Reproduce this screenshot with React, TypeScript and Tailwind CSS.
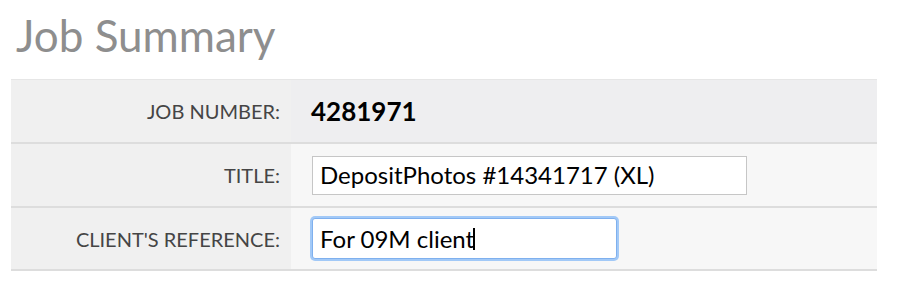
import React from "react";

export default function App() {
  return (
    <div className="w-[898px] h-[306px] bg-white" style={{ fontFamily: "Lato, 'Noto Sans', sans-serif" }}>
      <div className="pl-[11px] pt-[9px]">
        <h1 className="pl-[5px] text-[44px] leading-[52px] text-[#8e8e8e] font-normal">Job Summary</h1>
        <div className="mt-[18px] w-[866px] border-t border-[#e6e6e6]">
          <div className="flex h-[64px] border-b-2 border-[#dddddd]">
            <div className="w-[280px] bg-[#f0f0f0] flex items-center justify-end pr-[11px] text-[20px] text-[#454545] uppercase">
              Job Number:
            </div>
            <div className="flex-1 bg-[#eeeef0] flex items-center pl-[20px] text-[26px] font-bold text-black">
              4281971
            </div>
          </div>
          <div className="flex h-[64px] border-b-2 border-[#dddddd]">
            <div className="w-[280px] bg-[#f0f0f0] flex items-center justify-end pr-[11px] text-[20px] text-[#454545] uppercase">
              Title:
            </div>
            <div className="flex-1 bg-[#f7f7f7] flex items-center pl-[21px]">
              <div className="w-[435px] h-[39px] bg-white border border-[#c6c6c6] flex items-center pl-[7px] text-[24px] text-black leading-none">
                DepositPhotos #14341717 (XL)
              </div>
            </div>
          </div>
          <div className="flex h-[63px] border-b-2 border-[#dddddd]">
            <div className="w-[280px] bg-[#f0f0f0] flex items-center justify-end pr-[11px] text-[20px] text-[#454545] uppercase">
              Client's Reference:
            </div>
            <div className="flex-1 bg-[#f7f7f7] flex items-center pl-[21px]">
              <div className="w-[305px] h-[41px] bg-white border border-[#7fb0ee] rounded-[3px] shadow-[0_0_0_2px_#a2c9f7] flex items-center pl-[7px] text-[24px] text-black leading-none">
                <span>For 09M client</span>
                <span className="inline-block w-[2px] h-[22px] bg-black ml-[-1px]" />
              </div>
            </div>
          </div>
        </div>
      </div>
    </div>
  );
}
